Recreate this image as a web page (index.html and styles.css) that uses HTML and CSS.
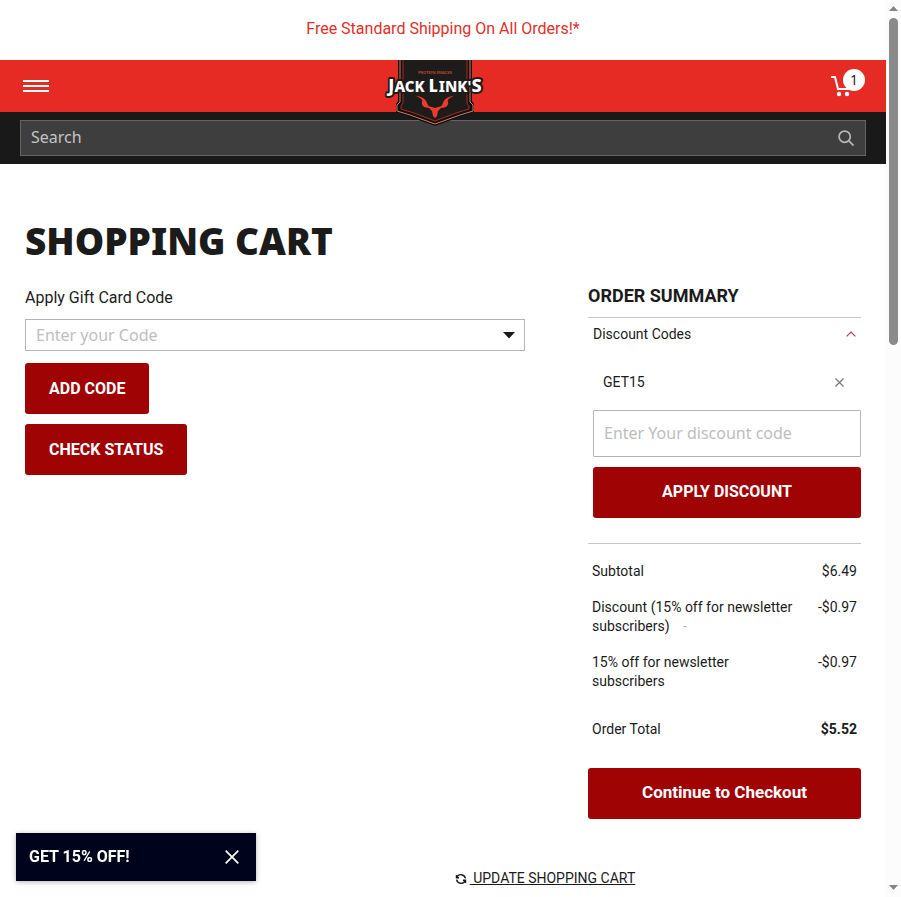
FILE: index.html
```html
<!DOCTYPE html>
<html lang="en">
<head>
<meta charset="utf-8">
<meta name="viewport" content="width=device-width, initial-scale=1">
<title>Shopping Cart | Jack Link's</title>
<link rel="stylesheet" href="styles.css">
</head>
<body>
<p class="promo"><a href="#">Free Standard Shipping On All Orders!*</a></p>
<header>
  <div class="bar">
    <button class="icon-button menu" type="button" aria-label="Menu">
      <svg width="26" height="14" viewBox="0 0 26 14"><path d="M0 2h26M0 7h26M0 12h26" stroke="#fff" stroke-width="2"/></svg>
    </button>
    <a class="logo" href="#" aria-label="Jack Link's home">
      <svg width="98" height="66" viewBox="0 0 98 66">
        <path d="M12 0v41l-2 3v8l14 5 25 9 25-9 14-5v-8l-2-3V0z" fill="#111"/>
        <path d="M14 0v42l-3 3v6l13 4 25 9 25-9 13-4v-6l-3-3V0" fill="none" stroke="#d8785e"/>
        <path d="M17 0v43l-2 3v3l13 4 21 8 21-8 13-4v-3l-2-3V0" fill="#1d1c1b" stroke="#a92b20"/>
        <text x="49" y="14" class="logo-small">PROTEIN SNACKS</text>
        <text x="49" y="32" class="logo-name"><tspan class="logo-cap">J</tspan>ACK <tspan class="logo-cap">L</tspan>INK'<tspan class="logo-cap">S</tspan></text>
        <path d="M30 36c5 0 10 3 11 7 1 3 3 4 5 4 1 0 2 1 3 1s2-1 3-1c2 0 4-1 5-4 1-4 6-7 11-7-5 2-7 4-6 6 1 3-2 6-7 6l-3 3-1 5-2 2-2-2-1-5-3-3c-5 0-8-3-7-6 1-2-1-4-6-6z" fill="#ee3a2c"/>
      </svg>
    </a>
    <a class="cart" href="#" aria-label="Cart, 1 item">
      <svg width="22" height="22" viewBox="0 0 22 22"><path d="M0 2h4l3 12h11l2-8" fill="none" stroke="#fff" stroke-width="2"/><circle cx="8" cy="19" r="2.200" fill="#fff"/><circle cx="16" cy="19" r="2.200" fill="#fff"/></svg>
      <span class="badge">1</span>
    </a>
  </div>
  <form class="search">
    <div class="search-box">
      <input type="search" placeholder="Search" aria-label="Search">
      <button class="icon-button" type="button" aria-label="Submit search">
        <svg width="16" height="16" viewBox="0 0 18 18" fill="none" stroke="#b5b5b5" stroke-width="2"><circle cx="7.500" cy="7.500" r="6.300"/><path d="M12 12l5.500 5.500"/></svg>
      </button>
    </div>
  </form>
</header>
<main>
  <h1>SHOPPING CART</h1>
  <div class="columns">
    <form class="gift">
      <label for="gift">Apply Gift Card Code</label>
      <div class="combo">
        <input id="gift" type="text" placeholder="Enter your Code">
        <svg width="12" height="7" viewBox="0 0 12 7"><path d="M0 0h12L6 6.500z" fill="#1b1b1b"/></svg>
      </div>
      <button class="primary" type="button">ADD CODE</button>
      <button class="primary" type="button">CHECK STATUS</button>
    </form>
    <section class="summary">
      <h2>ORDER SUMMARY</h2>
      <form class="discount">
        <button class="toggle" type="button" aria-expanded="true">Discount Codes
          <svg width="10" height="6" viewBox="0 0 10 6"><path d="M.6 5.400L5 1l4.400 4.400" fill="none" stroke="#b0405c" stroke-width="1.200"/></svg>
        </button>
        <div class="applied"><span>GET15</span>
          <button class="icon-button" type="button" aria-label="Remove GET15"><svg width="9" height="9" viewBox="0 0 9 9"><path d="M.5.5l8 8M8.500.5l-8 8" stroke="#777" stroke-width="1.200"/></svg></button>
        </div>
        <input type="text" placeholder="Enter Your discount code" aria-label="Discount code">
        <button class="primary" type="button">APPLY DISCOUNT</button>
      </form>
      <table>
        <tbody>
          <tr><th scope="row">Subtotal</th><td>$6.49</td></tr>
          <tr><th scope="row">Discount (15% off for newsletter subscribers) <span class="dash">-</span></th><td>-$0.97</td></tr>
          <tr><th scope="row">15% off for newsletter subscribers</th><td>-$0.97</td></tr>
          <tr class="total"><th scope="row">Order Total</th><td>$5.52</td></tr>
        </tbody>
      </table>
      <button class="primary checkout" type="button">Continue to Checkout</button>
    </section>
  </div>
  <div class="update">
    <svg width="12" height="12" viewBox="0 0 12 12" fill="none" stroke="#1b1b1b" stroke-width="1.400"><path d="M1.800 4.500A4.500 4.500 0 0 1 10.400 5.300M10.200 7.500A4.500 4.500 0 0 1 1.600 6.700M1.500 2v2.700h2.600M10.500 10V7.300H7.900"/></svg>
    <a href="#">&nbsp;UPDATE SHOPPING CART</a>
  </div>
</main>
<aside class="offer">
  <button class="offer-open" type="button">GET 15% OFF!</button>
  <button class="icon-button" type="button" aria-label="Close offer"><svg width="14" height="14" viewBox="0 0 14 14"><path d="M.7.7l12.600 12.600M13.300.7L.7 13.300" stroke="#fff" stroke-width="1.700"/></svg></button>
</aside>
<div class="scrollbar" aria-hidden="true">
  <svg width="9" height="5" viewBox="0 0 9 5"><path d="M0 5L4.500 0 9 5z" fill="#858585"/></svg>
  <div class="track"><div class="thumb"></div></div>
  <svg width="9" height="5" viewBox="0 0 9 5"><path d="M0 0h9L4.500 5z" fill="#858585"/></svg>
</div>
</body>
</html>
```
FILE: styles.css
```css
* { box-sizing: border-box; }
body {
  margin: 0;
  padding-right: 15px;
  background: #fff;
  color: #1b1b1b;
  font: 14px/19px Roboto, sans-serif;
}
button, input { font: inherit; color: inherit; margin: 0; }
button { border: 0; cursor: pointer; }
svg { display: block; flex: none; }
a { color: inherit; }

.promo { margin: 0; padding: 19px 0; text-align: center; color: #e12f2a; font-size: 16px; line-height: 20px; height: 60px; }
.promo a { text-decoration: none; }
.icon-button { padding: 0; background: none; }

.bar { display: flex; align-items: center; justify-content: space-between; position: relative; height: 52px; padding: 0 21px 0 23px; background: #e62b25; }
.logo { position: absolute; top: 0; left: 50%; margin-left: -57px; z-index: 1; }
.logo svg { overflow: visible; }
.logo-small { font: 700 4px "Open Sans", sans-serif; fill: #b5452f; text-anchor: middle; }
.logo-name { font: 800 15px "Noto Sans", sans-serif; fill: #fff; stroke: #1d1c1b; stroke-width: 4px; stroke-linejoin: round; paint-order: stroke; text-anchor: middle; }
.logo-cap { font-size: 18px; }
.cart { display: flex; position: relative; width: 34px; text-decoration: none; }
.badge { position: absolute; left: 12px; top: -6px; width: 22px; height: 22px; border-radius: 50%; background: #fff; color: #111; font: 14px/22px "Open Sans", sans-serif; text-align: center; }

.search { padding: 8px 20px; background: #191919; }
.search-box { display: flex; align-items: center; height: 36px; padding: 0 11px 0 10px; border: 1px solid #646464; background: #3e3e3e; }
.search input { flex: 1; min-width: 0; padding: 0 0 2px; border: 0; outline: 0; background: none; color: #fff; font: 16px/22px "Noto Sans", sans-serif; }
.search input::placeholder { color: #c4c4c4; opacity: 1; }

main { padding: 51px 25px 9px; }
h1 { margin: 0; font: 900 37px/52px "Noto Sans", sans-serif; }
.columns { display: grid; grid-template-columns: minmax(0, 500fr) minmax(0, 273fr); column-gap: 63px; padding-top: 18px; }
.gift { display: flex; flex-direction: column; align-items: flex-start; gap: 10px; }
.gift label { padding-top: 3px; font-size: 16px; line-height: 20px; }
.combo { display: flex; align-items: center; width: 100%; height: 32px; margin: 1px 0 2px; padding: 0 9px 0 10px; border: 1px solid #b5b5b5; }
.combo input { flex: 1; min-width: 0; padding: 0; border: 0; outline: 0; font: 16px/22px "Noto Sans", sans-serif; }
.gift input::placeholder, .discount input::placeholder { color: #bdbdbd; opacity: 1; }
.primary { height: 51px; padding: 0 24px; border-radius: 3px; background: #9f0304; color: #fff; font-size: 16px; font-weight: 700; }

.summary { display: flex; flex-direction: column; }
h2 { margin: 0; padding-bottom: 10px; border-bottom: 1px solid #c6c6c6; font-size: 18px; line-height: 22px; font-weight: 700; }
.discount { display: flex; flex-direction: column; padding: 0 0 25px 5px; border-bottom: 1px solid #c6c6c6; }
.toggle { display: flex; align-items: center; justify-content: space-between; height: 32px; padding: 0 5px 0 0; background: none; }
.applied { display: flex; align-items: center; justify-content: space-between; height: 60px; padding: 4px 17px 0 10px; }
.discount input { width: 100%; height: 47px; padding: 0 10px 2px; border: 1px solid #b5b5b5; border-radius: 1px; font: 16px/22px "Noto Sans", sans-serif; }
.discount .primary { margin-top: 10px; padding-bottom: 2px; }
table { margin: 1px 4px 29px; border-collapse: collapse; }
th, td { padding: 17px 0 0; font-weight: 400; vertical-align: top; }
th { text-align: left; }
td { width: 56px; text-align: right; }
.dash { margin-left: 10px; color: #b5b5b5; }
.total th, .total td { padding-top: 29px; }
.total td { font-weight: 700; }
.checkout { padding-bottom: 2px; font-size: 17px; }
.update { display: flex; align-items: center; justify-content: flex-end; gap: 3px; width: 73%; padding-top: 50px; }

.offer { position: fixed; left: 16px; bottom: 16px; display: flex; align-items: center; justify-content: space-between; width: 240px; height: 48px; padding: 0 17px 0 13px; background: #00031c; box-shadow: 0 1px 5px rgba(0, 0, 0, .3); }
.offer-open { padding: 0 0 2px; background: none; color: #fff; font-size: 16px; font-weight: 700; }
.scrollbar { position: fixed; top: 0; right: 0; bottom: 0; display: flex; flex-direction: column; align-items: center; width: 15px; padding: 6px 0 7px; background: #fcfcfc; }
.track { flex: 1; width: 9px; margin: 7px 0; }
.thumb { height: 38%; border-radius: 5px; background: #8a8a8a; }
```
